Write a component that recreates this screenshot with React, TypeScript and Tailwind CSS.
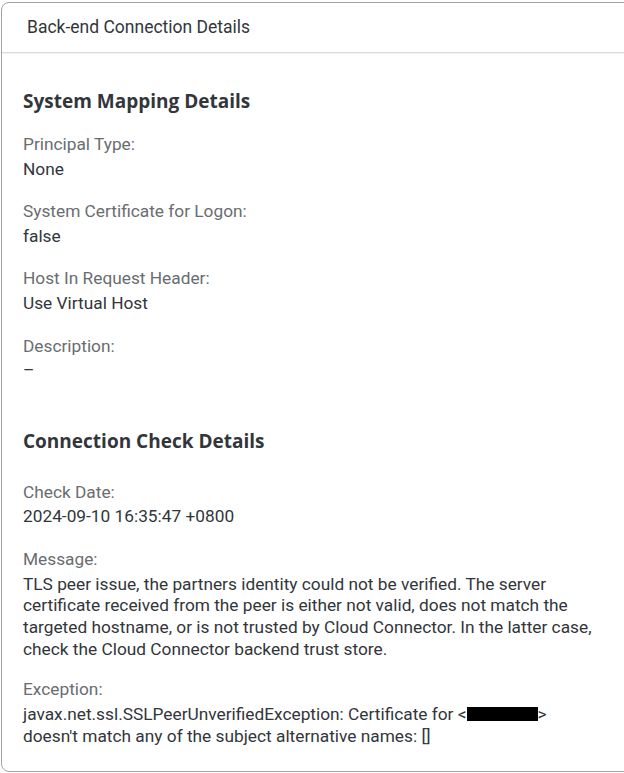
const sans = "font-['Roboto','Liberation_Sans',sans-serif]"

function Field({ label, children, className = "" }: { label: string; children: React.ReactNode; className?: string }) {
  return (
    <div className={className}>
      <div className="text-[17.3px] leading-[22px] text-[#6a6d70]">{label}</div>
      <div className="mt-[3.5px] text-[17.3px] leading-[21.7px] text-[#32363a]">{children}</div>
    </div>
  )
}

export default function App() {
  return (
    <div className={`w-[624px] h-[773px] overflow-hidden bg-white ${sans}`}>
      <div className="ml-px mt-[2px] w-[660px] h-[770px] rounded-l-lg border border-[#a3a3a3] bg-white">
        <div className="flex h-[50px] items-center border-b border-[#d9d9d9] pl-[25px] shadow-[0_1px_1px_rgba(0,0,0,0.04)]">
          <span className="text-[17.5px] text-[#32363a]">Back-end Connection Details</span>
        </div>

        <div className="pl-[21px] w-[620px]">
          <h2 className="mt-[36px] text-[19px] leading-[24px] font-bold text-[#32363a] font-['Open_Sans',sans-serif]">
            System Mapping Details
          </h2>
          <Field label="Principal Type:" className="mt-[20px]">None</Field>
          <Field label="System Certificate for Logon:" className="mt-[20px]">false</Field>
          <Field label="Host In Request Header:" className="mt-[20px]">Use Virtual Host</Field>
          <Field label="Description:" className="mt-[20px]">–</Field>

          <h2 className="mt-[47px] text-[19px] leading-[24px] font-bold text-[#32363a] font-['Open_Sans',sans-serif]">
            Connection Check Details
          </h2>
          <Field label="Check Date:" className="mt-[28px]">2024-09-10 16:35:47 +0800</Field>
          <Field label="Message:" className="mt-[20px]">
            TLS peer issue, the partners identity could not be verified. The server
            <br />
            certificate received from the peer is either not valid, does not match the
            <br />
            targeted hostname, or is not trusted by Cloud Connector. In the latter case,
            <br />
            check the Cloud Connector backend trust store.
          </Field>
          <Field label="Exception:" className="mt-[18px]">
            javax.net.ssl.SSLPeerUnverifiedException: Certificate for &lt;
            <span className="inline-block h-[14px] w-[71px] bg-black align-[-1px]" />
            &gt;
            <br />
            doesn't match any of the subject alternative names: []
          </Field>
        </div>
      </div>
    </div>
  )
}
